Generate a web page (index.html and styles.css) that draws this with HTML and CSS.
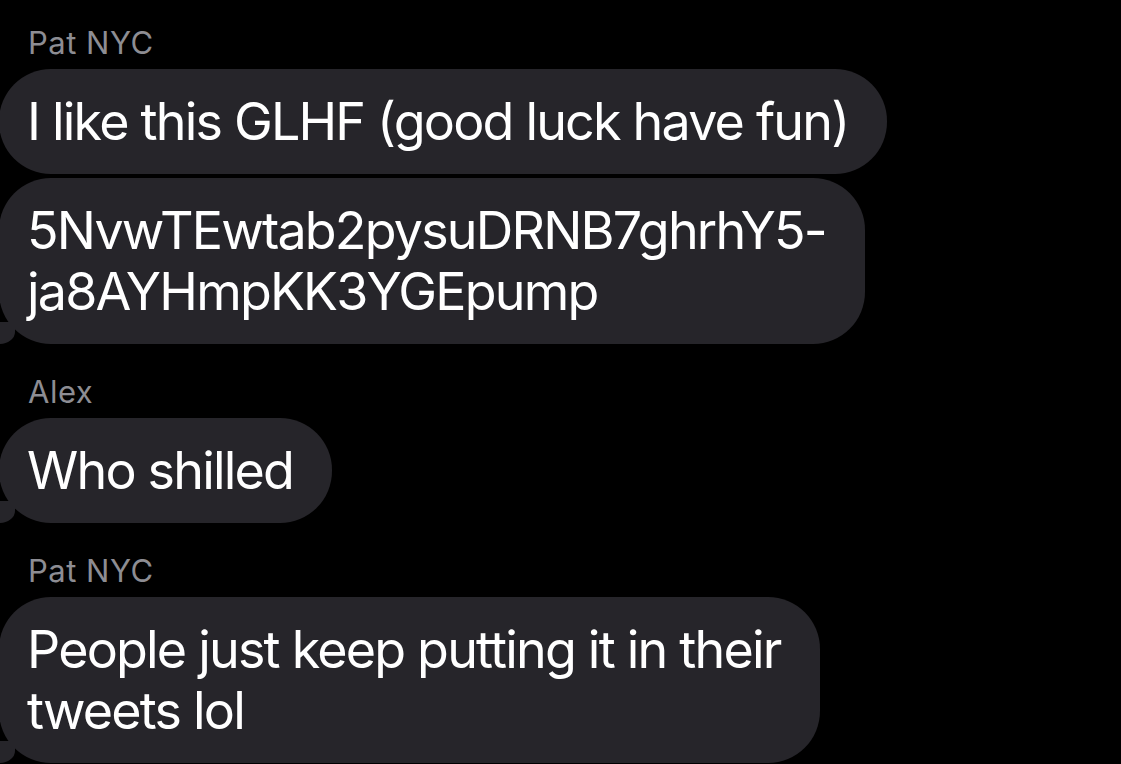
FILE: index.html
```html
<!DOCTYPE html>
<html>

<head>
    <link rel="stylesheet" href="styles.css">
</head>

<body>
    <div class="thread">
        <div class="group">
            <div class="sender">Pat NYC</div>
            <div class="bubble">I like this GLHF (good luck have fun)</div>
            <div class="bubble tail">5NvwTEwtab2pysuDRNB7ghrhY5-<br>ja8AYHmpKK3YGEpump</div>
        </div>
        <div class="group">
            <div class="sender">Alex</div>
            <div class="bubble tail">Who shilled</div>
        </div>
        <div class="group">
            <div class="sender">Pat NYC</div>
            <div class="bubble tail">People just keep putting it in their<br>tweets lol</div>
        </div>
    </div>
</body>

</html>
```
FILE: styles.css
```css
html,
body {
    margin: 0;
    background: #000;
}

body {
    font-family: Inter, "Noto Sans", sans-serif;
    color: #fff;
    overflow: hidden;
}

.thread {
    display: flex;
    flex-direction: column;
    padding-top: 24px;
}

.group {
    display: flex;
    flex-direction: column;
    align-items: flex-start;
    gap: 4px;
    margin-bottom: 29px;
}

.sender {
    font-size: 31px;
    line-height: 38px;
    letter-spacing: 0.5px;
    color: #8d8d93;
    padding-left: 28px;
    margin-bottom: 3px;
}

.bubble {
    position: relative;
    background: #26252a;
    font-size: 52px;
    line-height: 61px;
    letter-spacing: -1.8px;
    padding: 22px 39px 22px 28px;
    border-radius: 52px;
    margin-left: -1px;
}

.tail::before {
    content: "";
    position: absolute;
    left: -6px;
    bottom: 0;
    width: 22px;
    height: 22px;
    background: #26252a;
    border-bottom-right-radius: 16px 12px;
}

.tail::after {
    content: "";
    position: absolute;
    left: -12px;
    bottom: 0;
    width: 12px;
    height: 24px;
    background: #000;
    border-bottom-right-radius: 10px 10px;
}
```
